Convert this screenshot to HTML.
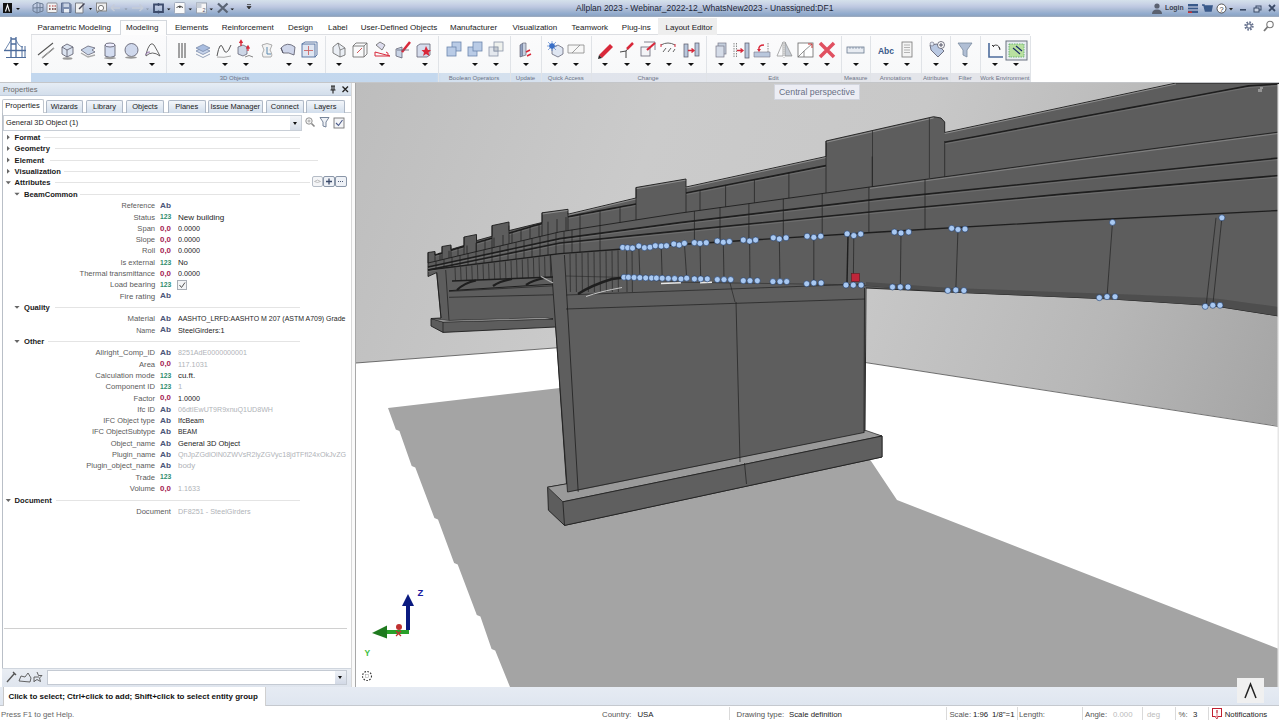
<!DOCTYPE html><html><head><meta charset="utf-8"><style>
*{margin:0;padding:0;box-sizing:border-box}
html,body{width:1279px;height:720px;overflow:hidden;background:#fff;font-family:"Liberation Sans",sans-serif;position:relative}
.a{position:absolute}
.t{position:absolute;white-space:pre;line-height:1}
svg{position:absolute;overflow:visible}
</style></head><body>
<div class="a" style="left:0;top:0;width:1279px;height:17px;background:linear-gradient(#d5e1eb 0px,#c9d3e6 4px,#bcc7e0 7px,#a9bad4 10px,#90aacd 14px,#8ea3bf 16px,#a9b3c2 17px)"></div>
<div class="t" style="left:576px;top:4px;font-size:8.5px;color:#1c2636">Allplan 2023 - Webinar_2022-12_WhatsNew2023 - Unassigned:DF1</div>
<div class="a" style="left:3px;top:3px;width:9px;height:10px;background:#111"></div>
<svg style="left:3px;top:3px" width="9" height="10"><path d="M2.5 8.5 L4.5 2 L6.5 8.5" stroke="#fff" stroke-width="1.1" fill="none"/></svg>
<div class="a" style="left:15.5px;top:8px;width:0;height:0;border-left:2.5px solid transparent;border-right:2.5px solid transparent;border-top:2.5px solid #111"></div>

<svg style="left:0;top:0" width="260" height="17" viewBox="0 0 260 17">
<g fill="none" stroke-width="1">
<path d="M33 5 L37 2.5 L43 4 V11 L37 13 L33 11 Z M37 2.5 V13 M33 8 L43 7.5 M40 3.2 V12" stroke="#6d7d95"/>
<rect x="47" y="3" width="10" height="9.5" rx="1" fill="#f2f2f2" stroke="#8a8f98"/>
<path d="M49 6 H50.5 M52 6 H53.5 M54.5 6 H56 M49 9 H50.5 M52 9 H53.5 M54.5 9 H56" stroke="#b03030" stroke-width="1.2"/>
<path d="M49 9 H50.5 M52 9 H53.5 M54.5 9 H56" stroke="#333" stroke-width="1.2"/>
<path d="M61.5 3 H69.5 L71 4.5 V12.5 H61.5 Z" fill="#7e8fb0" stroke="#5e6f90"/><rect x="63.5" y="3.5" width="5.5" height="3.5" fill="#c9d3e3" stroke="none"/><rect x="64" y="9" width="5" height="3.5" fill="#e8edf4" stroke="none"/>
<path d="M75.5 3 H83 V13 H75.5 Z" fill="#f0f0f0" stroke="#7a7f88"/><path d="M79 9 L84.5 3.5" stroke="#445" stroke-width="1.4"/>
<path d="M89 8 L92 8 L90.5 10Z" fill="#111" stroke="none"/>
<rect x="96.5" y="3" width="10" height="8" fill="#eee" stroke="#888"/><circle cx="101" cy="8" r="2.6" fill="#fff" stroke="#777"/><path d="M99 10.5 L97 13" stroke="#777"/>
<path d="M111 8 L114.5 4.5 M111 8 L114.5 11 M111 8 H120" stroke="#c5ccd8" stroke-width="1.5"/>
<path d="M124.5 8.5 L127.5 8.5 L126 10Z" fill="#8a94a4" stroke="none"/>
<path d="M143 8 L139.5 4.5 M143 8 L139.5 11 M143 8 H132" stroke="#c5ccd8" stroke-width="1.5"/>
<path d="M146 8.5 L149 8.5 L147.5 10Z" fill="#8a94a4" stroke="none"/>
<path d="M154 4.5 H163 V12 H154 Z" stroke="#3d4c6c" stroke-width="1.8"/><path d="M158.5 3 V6 M158.5 10.5 V13.5" stroke="#3d4c6c" stroke-width="1.4"/>
<path d="M167 8.5 L170.5 8.5 L168.75 10.3Z" fill="#111" stroke="none"/>
<rect x="174.5" y="2.5" width="10.5" height="11" rx="1" fill="#fafafa" stroke="#a0aabb"/><path d="M176.5 7.5 Q180 4.5 183 7.5" stroke="#444" stroke-width="1"/><circle cx="179.8" cy="7" r="1" fill="#444" stroke="none"/>
<path d="M188.5 8.5 L192 8.5 L190.25 10.3Z" fill="#111" stroke="none"/>
<rect x="196.5" y="3" width="10" height="10" fill="#f6f6f6" stroke="#98a0ac"/><rect x="196.5" y="3" width="5" height="5" fill="#c9cfd8" stroke="none"/><text x="202.5" y="12" font-size="5.5" fill="#556" stroke="none" font-family="Liberation Sans">2</text>
<path d="M209.5 8.5 L213 8.5 L211.25 10.3Z" fill="#111" stroke="none"/>
<path d="M218 3.5 L227.5 12.5 M227.5 3.5 L218 12.5" stroke="#5a6474" stroke-width="2.3"/>
<path d="M230.5 8.5 L234 8.5 L232.25 10.3Z" fill="#111" stroke="none"/>
<path d="M247 6.5 L251 6.5 L249 9Z M247 4.6 H251" fill="#333" stroke="#333" stroke-width="0.8"/>
</g></svg>
<svg style="left:1150px;top:1px" width="129" height="16">
<circle cx="7" cy="5" r="2.6" fill="#5a6170"/><path d="M2 13 Q2 8.5 7 8.5 Q12 8.5 12 13Z" fill="#5a6170"/>
<rect x="38" y="3" width="10" height="9" fill="#3a5a8a"/><rect x="38" y="5.5" width="10" height="1" fill="#dde"/><rect x="38" y="8.5" width="10" height="1" fill="#dde"/><rect x="38" y="10.5" width="4" height="1.5" fill="#c33"/>
<path d="M52 4 H54 L55.5 10 H61 L62 5 H55" stroke="#3a5a8a" stroke-width="1.6" fill="#3a5a8a"/>
<circle cx="71.5" cy="7.5" r="4.5" fill="#fff" stroke="#444" stroke-width="0.9"/><text x="71.5" y="10.5" font-size="7.5" text-anchor="middle" fill="#333" font-family="Liberation Sans">?</text>
<path d="M79 7 L83 7 L81 9.5Z" fill="#222"/>
<rect x="90" y="8" width="6" height="1.6" fill="#3a4a66"/>
<rect x="106" y="5" width="5" height="4" fill="none" stroke="#3a4a66"/><rect x="104" y="7" width="5" height="4" fill="#c8d2e2" stroke="#3a4a66"/>
<path d="M119 4 L125 10 M125 4 L119 10" stroke="#3a4a66" stroke-width="1.8"/>
</svg>
<div class="t" style="left:1165.40px;top:4.20px;font-size:8px;font-weight:bold;color:#3a4250;transform:scaleX(0.854);transform-origin:left center;">Login</div>
<div class="a" style="left:31px;top:34px;width:999px;height:1px;background:#dcdee2"></div>
<div class="a" style="left:658px;top:18px;width:59px;height:17px;background:#eeeeee"></div>
<div class="a" style="left:119.5px;top:19.5px;width:47.5px;height:16px;background:#fdfdfd;border:1px solid #d4d8dd;border-bottom:none"></div>
<div class="t" style="left:37.5px;top:23.5px;font-size:8px;color:#1a1a1a">Parametric Modeling</div>
<div class="t" style="left:126px;top:23.5px;font-size:8px;color:#1a1a1a">Modeling</div>
<div class="t" style="left:175px;top:23.5px;font-size:8px;color:#1a1a1a">Elements</div>
<div class="t" style="left:221.7px;top:23.5px;font-size:8px;color:#1a1a1a">Reinforcement</div>
<div class="t" style="left:288px;top:23.5px;font-size:8px;color:#1a1a1a">Design</div>
<div class="t" style="left:328px;top:23.5px;font-size:8px;color:#1a1a1a">Label</div>
<div class="t" style="left:360.7px;top:23.5px;font-size:8px;color:#1a1a1a">User-Defined Objects</div>
<div class="t" style="left:450px;top:23.5px;font-size:8px;color:#1a1a1a">Manufacturer</div>
<div class="t" style="left:512.5px;top:23.5px;font-size:8px;color:#1a1a1a">Visualization</div>
<div class="t" style="left:571.6px;top:23.5px;font-size:8px;color:#1a1a1a">Teamwork</div>
<div class="t" style="left:621.8px;top:23.5px;font-size:8px;color:#1a1a1a">Plug-ins</div>
<div class="t" style="left:665.5px;top:23.5px;font-size:8px;color:#1a1a1a">Layout Editor</div>
<svg style="left:1242px;top:19px" width="36" height="15">
<circle cx="7" cy="7" r="3.6" fill="none" stroke="#6a7590" stroke-width="2.2" stroke-dasharray="1.6 1.2"/><circle cx="7" cy="7" r="2.2" fill="none" stroke="#6a7590" stroke-width="1.2"/>
<circle cx="28" cy="5.5" r="3.2" fill="none" stroke="#777" stroke-width="1.1"/><path d="M25.5 8 L22 12" stroke="#777" stroke-width="1.8"/>
</svg>
<div class="a" style="left:31px;top:35px;width:999px;height:38px;background:linear-gradient(#fbfbfc,#f7f8f9);border-left:1px solid #e3e5e8"></div>
<div class="a" style="left:31px;top:73px;width:999px;height:9px;background:linear-gradient(90deg,#c2d7ee 0px,#c4d8ee 405px,#d3e0ee 410px,#d6e1ee 510px,#dde4ee 540px,#e0e4ec 560px,#e3e5ea 800px,#e4e5ea 999px)"></div>
<div class="a" style="left:0;top:82px;width:1279px;height:1px;background:#c4c6c9"></div>
<div class="a" style="left:166.0px;top:36px;width:1px;height:37px;background:#e0e3e7"></div>
<div class="a" style="left:324.6px;top:36px;width:1px;height:37px;background:#e0e3e7"></div>
<div class="a" style="left:438.0px;top:36px;width:1px;height:46px;background:#e0e3e7"></div>
<div class="a" style="left:510.0px;top:36px;width:1px;height:46px;background:#e0e3e7"></div>
<div class="a" style="left:541.0px;top:36px;width:1px;height:46px;background:#e0e3e7"></div>
<div class="a" style="left:590.6px;top:36px;width:1px;height:46px;background:#e0e3e7"></div>
<div class="a" style="left:705.6px;top:36px;width:1px;height:46px;background:#e0e3e7"></div>
<div class="a" style="left:841.4px;top:36px;width:1px;height:46px;background:#e0e3e7"></div>
<div class="a" style="left:870.0px;top:36px;width:1px;height:46px;background:#e0e3e7"></div>
<div class="a" style="left:921.0px;top:36px;width:1px;height:46px;background:#e0e3e7"></div>
<div class="a" style="left:950.4px;top:36px;width:1px;height:46px;background:#e0e3e7"></div>
<div class="a" style="left:980.0px;top:36px;width:1px;height:46px;background:#e0e3e7"></div>
<div class="a" style="left:1029.6px;top:36px;width:1px;height:46px;background:#e0e3e7"></div>
<div class="t" style="left:174.5px;width:120px;text-align:center;top:75px;font-size:6px;color:#6b7386">3D Objects</div>
<div class="t" style="left:414px;width:120px;text-align:center;top:75px;font-size:6px;color:#6b7386">Boolean Operators</div>
<div class="t" style="left:465.5px;width:120px;text-align:center;top:75px;font-size:6px;color:#6b7386">Update</div>
<div class="t" style="left:505.79999999999995px;width:120px;text-align:center;top:75px;font-size:6px;color:#6b7386">Quick Access</div>
<div class="t" style="left:588px;width:120px;text-align:center;top:75px;font-size:6px;color:#6b7386">Change</div>
<div class="t" style="left:713.5px;width:120px;text-align:center;top:75px;font-size:6px;color:#6b7386">Edit</div>
<div class="t" style="left:795.7px;width:120px;text-align:center;top:75px;font-size:6px;color:#6b7386">Measure</div>
<div class="t" style="left:835.5px;width:120px;text-align:center;top:75px;font-size:6px;color:#6b7386">Annotations</div>
<div class="t" style="left:875.7px;width:120px;text-align:center;top:75px;font-size:6px;color:#6b7386">Attributes</div>
<div class="t" style="left:905.2px;width:120px;text-align:center;top:75px;font-size:6px;color:#6b7386">Filter</div>
<div class="t" style="left:944.8px;width:120px;text-align:center;top:75px;font-size:6px;color:#6b7386">Work Environment</div>
<div class="a" style="left:12.5px;top:63px;width:0;height:0;border-left:3px solid transparent;border-right:3px solid transparent;border-top:3.5px solid #111"></div>
<div class="a" style="left:43px;top:63px;width:0;height:0;border-left:3px solid transparent;border-right:3px solid transparent;border-top:3.5px solid #111"></div>
<div class="a" style="left:107px;top:63px;width:0;height:0;border-left:3px solid transparent;border-right:3px solid transparent;border-top:3.5px solid #111"></div>
<div class="a" style="left:149px;top:63px;width:0;height:0;border-left:3px solid transparent;border-right:3px solid transparent;border-top:3.5px solid #111"></div>
<div class="a" style="left:178.5px;top:63px;width:0;height:0;border-left:3px solid transparent;border-right:3px solid transparent;border-top:3.5px solid #111"></div>
<div class="a" style="left:221.5px;top:63px;width:0;height:0;border-left:3px solid transparent;border-right:3px solid transparent;border-top:3.5px solid #111"></div>
<div class="a" style="left:242.5px;top:63px;width:0;height:0;border-left:3px solid transparent;border-right:3px solid transparent;border-top:3.5px solid #111"></div>
<div class="a" style="left:285.5px;top:63px;width:0;height:0;border-left:3px solid transparent;border-right:3px solid transparent;border-top:3.5px solid #111"></div>
<div class="a" style="left:306.5px;top:63px;width:0;height:0;border-left:3px solid transparent;border-right:3px solid transparent;border-top:3.5px solid #111"></div>
<div class="a" style="left:336px;top:63px;width:0;height:0;border-left:3px solid transparent;border-right:3px solid transparent;border-top:3.5px solid #111"></div>
<div class="a" style="left:378.6px;top:63px;width:0;height:0;border-left:3px solid transparent;border-right:3px solid transparent;border-top:3.5px solid #111"></div>
<div class="a" style="left:421.5px;top:63px;width:0;height:0;border-left:3px solid transparent;border-right:3px solid transparent;border-top:3.5px solid #111"></div>
<div class="a" style="left:472px;top:63px;width:0;height:0;border-left:3px solid transparent;border-right:3px solid transparent;border-top:3.5px solid #111"></div>
<div class="a" style="left:493px;top:63px;width:0;height:0;border-left:3px solid transparent;border-right:3px solid transparent;border-top:3.5px solid #111"></div>
<div class="a" style="left:522.7px;top:63px;width:0;height:0;border-left:3px solid transparent;border-right:3px solid transparent;border-top:3.5px solid #111"></div>
<div class="a" style="left:552px;top:63px;width:0;height:0;border-left:3px solid transparent;border-right:3px solid transparent;border-top:3.5px solid #111"></div>
<div class="a" style="left:573px;top:63px;width:0;height:0;border-left:3px solid transparent;border-right:3px solid transparent;border-top:3.5px solid #111"></div>
<div class="a" style="left:602px;top:63px;width:0;height:0;border-left:3px solid transparent;border-right:3px solid transparent;border-top:3.5px solid #111"></div>
<div class="a" style="left:624px;top:63px;width:0;height:0;border-left:3px solid transparent;border-right:3px solid transparent;border-top:3.5px solid #111"></div>
<div class="a" style="left:645px;top:63px;width:0;height:0;border-left:3px solid transparent;border-right:3px solid transparent;border-top:3.5px solid #111"></div>
<div class="a" style="left:666px;top:63px;width:0;height:0;border-left:3px solid transparent;border-right:3px solid transparent;border-top:3.5px solid #111"></div>
<div class="a" style="left:688px;top:63px;width:0;height:0;border-left:3px solid transparent;border-right:3px solid transparent;border-top:3.5px solid #111"></div>
<div class="a" style="left:717.7px;top:63px;width:0;height:0;border-left:3px solid transparent;border-right:3px solid transparent;border-top:3.5px solid #111"></div>
<div class="a" style="left:738.5px;top:63px;width:0;height:0;border-left:3px solid transparent;border-right:3px solid transparent;border-top:3.5px solid #111"></div>
<div class="a" style="left:760px;top:63px;width:0;height:0;border-left:3px solid transparent;border-right:3px solid transparent;border-top:3.5px solid #111"></div>
<div class="a" style="left:781.5px;top:63px;width:0;height:0;border-left:3px solid transparent;border-right:3px solid transparent;border-top:3.5px solid #111"></div>
<div class="a" style="left:802.7px;top:63px;width:0;height:0;border-left:3px solid transparent;border-right:3px solid transparent;border-top:3.5px solid #111"></div>
<div class="a" style="left:824px;top:63px;width:0;height:0;border-left:3px solid transparent;border-right:3px solid transparent;border-top:3.5px solid #111"></div>
<div class="a" style="left:853px;top:63px;width:0;height:0;border-left:3px solid transparent;border-right:3px solid transparent;border-top:3.5px solid #111"></div>
<div class="a" style="left:883px;top:63px;width:0;height:0;border-left:3px solid transparent;border-right:3px solid transparent;border-top:3.5px solid #111"></div>
<div class="a" style="left:904px;top:63px;width:0;height:0;border-left:3px solid transparent;border-right:3px solid transparent;border-top:3.5px solid #111"></div>
<div class="a" style="left:933px;top:63px;width:0;height:0;border-left:3px solid transparent;border-right:3px solid transparent;border-top:3.5px solid #111"></div>
<div class="a" style="left:962px;top:63px;width:0;height:0;border-left:3px solid transparent;border-right:3px solid transparent;border-top:3.5px solid #111"></div>
<div class="a" style="left:992px;top:63px;width:0;height:0;border-left:3px solid transparent;border-right:3px solid transparent;border-top:3.5px solid #111"></div>
<div class="a" style="left:1013px;top:63px;width:0;height:0;border-left:3px solid transparent;border-right:3px solid transparent;border-top:3.5px solid #111"></div>
<svg style="left:0;top:0" width="1279" height="83" viewBox="0 0 1279 83"><g fill="none" stroke="#4d6c9c" stroke-width="1.3"><path d="M11 37 V58 M16 37 V58 M11 39 H16 M11 44 H16"/><path d="M22 46 V57 M25 46 V57" stroke-width="1"/><path d="M4 50.5 H26" stroke-width="1.4"/><path d="M5 50 Q8 45 11 40 M16 40 Q19 47 23 47" stroke-width="0.8"/><path d="M6 57.5 H26" stroke-width="1"/></g><path d="M38 55 L53 43 M42 58 L54 48" stroke="#555" stroke-width="1.1" fill="none"/><path d="M42 58 L54 48" stroke="#aaa" stroke-width="1"/><g stroke="#556" stroke-width="0.8"><path d="M62 47 L67 44 L73 47 L73 54 L67 57 L62 54Z" fill="#dbe3f0"/><path d="M62 47 L67 50 L73 47 M67 50 V57" fill="none"/></g><ellipse cx="67.5" cy="58.5" rx="5" ry="1.2" fill="#999"/><g stroke="#667" stroke-width="0.8"><path d="M81 50 L88 46 L95 48 L92 50 L95 52 L88 55Z" fill="#c9d6ea"/></g><path d="M81 53 L88 57 L95 55" stroke="#aaa" stroke-width="1.4" fill="none"/><g stroke="#556" stroke-width="0.8"><path d="M105 45 V56 Q110 59 115 56 V45" fill="#d3dcf0"/><ellipse cx="110" cy="45" rx="5" ry="2" fill="#eef"/></g><ellipse cx="110" cy="58" rx="6" ry="1.2" fill="#999"/><circle cx="131.5" cy="50" r="6.5" fill="#cfd8ec" stroke="#556" stroke-width="0.8"/><ellipse cx="131" cy="57.5" rx="6" ry="1.2" fill="#999"/><path d="M146 54 Q150 40 154 45 Q158 52 160 56 Q152 50 146 56Z" fill="none" stroke="#555" stroke-width="0.9"/><path d="M145.5 55 Q147 51 150 52" stroke="#8a6aa0" fill="#d8c8e8" stroke-width="0.8"/><path d="M179 43 V58 M182 43 V58 M185 43 V58" stroke="#333" stroke-width="0.9"/><g stroke="#7a8aa8" stroke-width="0.8"><path d="M196 51 L203 47.5 L210 51 L203 54.5Z" fill="#c8d5ec"/><path d="M196 48 L203 44.5 L210 48 L203 51.5Z" fill="#a9bde0"/><path d="M196 54 L203 57.5 L210 54" fill="none"/></g><path d="M217 56 Q220 40 223 48 Q226 58 231 45" fill="none" stroke="#555" stroke-width="1"/><path d="M217 57 Q224 58 231 56" stroke="#aaa" fill="none"/><path d="M238 47 L243 45 L247 47 V54 L243 56 L238 54Z" fill="#cdd6e6" stroke="#556" stroke-width="0.7"/><path d="M241 46 V41 M239.5 43 L241 40.5 L242.5 43" stroke="#d8283a" stroke-width="1.4" fill="#d8283a"/><path d="M248 51 V47 M246.5 48.5 L248 46 L249.5 48.5" stroke="#d8283a" stroke-width="1.2" fill="#d8283a"/><path d="M245 57 Q249 54 253 57" stroke="#888" fill="none"/><path d="M262 45 Q267 42 272 45 L270 50 Q273 55 271 57 L263 57 Q261 54 264 50Z" fill="#f3f3f3" stroke="#999" stroke-width="0.8"/><path d="M267 47 V54 H271" stroke="#5a8ab0" fill="none" stroke-width="1"/><path d="M281 48 Q287 41 295 47 L294 55 Q289 52 283 53Z" fill="#cfd6ea" stroke="#556" stroke-width="0.8"/><path d="M281 48 L283 53" stroke="#556" fill="none"/><g stroke="#4d6c9c" stroke-width="0.9"><rect x="302" y="44" width="13" height="13" fill="#dfe6f2"/><path d="M302 44 L305 42 H317 V55 L315 57" fill="none"/><path d="M308.5 46 V55 M304 50.5 H313" stroke="#c66"/></g><path d="M333 47 L338 43 L345 48 V55 L340 57 L333 53Z" fill="#eaeef4" stroke="#666" stroke-width="0.8"/><path d="M338 43 L340 50 L345 48 M340 50 V57" stroke="#666" fill="none" stroke-width="0.7"/><path d="M353 46 L356 43 H367 V54 L364 57 H353Z M353 46 H364 V57 M364 46 L367 43" fill="none" stroke="#666" stroke-width="0.8"/><path d="M357 53 L362 48" stroke="#c44" stroke-width="0.9"/><path d="M375 52 L390 56 H375Z" fill="none" stroke="#d8283a" stroke-width="1"/><path d="M376 45 L380 42 L385 45 L382 50Z" fill="#dde" stroke="#666" stroke-width="0.8"/><path d="M386 52 Q389 53 388 55" stroke="#d8283a" fill="none"/><path d="M396 49 L402 47 V58 L396 56Z" fill="#c9d4e6" stroke="#556" stroke-width="0.7"/><path d="M402 52 L410 42" stroke="#d8283a" stroke-width="2.5"/><path d="M397 50 H409" stroke="#667" stroke-width="0.8"/><path d="M417 46 L420 44 H430 V55 L427 57 H417Z" fill="#d5dcec" stroke="#667" stroke-width="0.8"/><path d="M426 46 L428 50 L431 50 L428.5 52.5 L429.5 56 L426 54 L423 56 L424 52.5 L421.5 50 L424.5 50Z" fill="#d8283a"/><g stroke="#6b86ad" stroke-width="0.8"><rect x="452" y="42" width="9" height="9" fill="#b9cbe6"/><rect x="447" y="47" width="9" height="9" fill="#b9cbe6"/></g><g stroke="#6b86ad" stroke-width="0.8"><rect x="468" y="47" width="9" height="9" fill="#b9cbe6"/><rect x="473" y="42" width="9" height="9" fill="#b9cbe6"/></g><g stroke="#8a95a8" stroke-width="0.8"><rect x="489" y="47" width="9" height="9" fill="#e4e8ee"/><rect x="494" y="42" width="9" height="9" fill="#e8ebe4" fill-opacity="0.6"/><rect x="494" y="47" width="4" height="4" fill="#c6cbd2"/></g><path d="M520 45 L523 43 V56 L520 57Z" fill="#90a0c0" stroke="#556" stroke-width="0.6"/><path d="M523 43 H526 V55 L523 56" fill="#c8d0e0" stroke="#556" stroke-width="0.6"/><path d="M526 52 L530 50 M527 56 L531 54" stroke="#d8283a" stroke-width="1.5"/><path d="M552 48 L558 45 L563 48 V54 L558 57 L552 54Z" fill="#dfe6f2" stroke="#667" stroke-width="0.8"/><circle cx="552" cy="46" r="2.8" fill="#3a70c8"/><path d="M548 42 L556 50 M556 42 L548 50 M552 41 V51 M547 46 H557" stroke="#3a70c8" stroke-width="0.6"/><path d="M568 45 H584 V53 H568Z" fill="#f7f7f7" stroke="#888" stroke-width="0.8"/><path d="M572 53 L580 45" stroke="#888" stroke-width="0.8"/><path d="M599 55 L610 44 L613 47 L602 58Z" fill="#d8283a"/><path d="M599 55 L598 59 L602 58Z" fill="#222"/><path d="M620 52 L626 51 L626 58 M626 51 L630 46" stroke="#333" stroke-width="0.9" fill="none"/><path d="M627 49 L633 43" stroke="#d8283a" stroke-width="2.5"/><rect x="641" y="47" width="9" height="9" fill="#f3f4f7" stroke="#667" stroke-width="0.8"/><path d="M644 42 H655 V50" fill="none" stroke="#667" stroke-width="0.8"/><path d="M647 50 L655 43" stroke="#d8283a" stroke-width="2.2"/><path d="M661 45 Q668 41 675 45" stroke="#555" fill="none" stroke-width="0.9"/><path d="M661 44 L661 47 M675 44 L675 47" stroke="#d8283a"/><path d="M663 52 L666 48 M668 52 L671 48 M673 52 L675 49" stroke="#555" stroke-width="0.9"/><rect x="684" y="44" width="4" height="13" fill="#b9c7dc" stroke="#556" stroke-width="0.7"/><rect x="695" y="43" width="4" height="13" fill="#b9c7dc" stroke="#556" stroke-width="0.7"/><path d="M688 50.5 H694 M691.5 48.5 L694 50.5 L691.5 52.5" stroke="#d8283a" stroke-width="1.4" fill="none"/><rect x="718" y="43" width="8" height="11" fill="#c5cfdd" stroke="#778" stroke-width="0.7"/><rect x="716" y="46" width="8" height="11" fill="#d5dce8" stroke="#778" stroke-width="0.7"/><path d="M734 43 V58 M736.5 43 V58" stroke="#888" stroke-dasharray="1.5 1"/><rect x="745" y="43" width="4" height="15" fill="#b9c7dc" stroke="#556" stroke-width="0.7"/><path d="M737 50.5 H743 M740.5 48.5 L743 50.5 L740.5 52.5" stroke="#d8283a" stroke-width="1.3" fill="none"/><path d="M754 52 H770 V57 H754Z" fill="#b9c7dc" stroke="#778" stroke-width="0.6"/><path d="M768 43 V52" stroke="#888" stroke-dasharray="1.5 1"/><path d="M764 45 Q758 45 759 50" stroke="#d8283a" stroke-width="1.4" fill="none"/><path d="M757 49 L759 52 L761 49" fill="#d8283a"/><path d="M777 56 L783 42 V56Z" fill="none" stroke="#999" stroke-width="0.8"/><path d="M785 42 L792 56 H785Z" fill="#c5cbd3" stroke="#888" stroke-width="0.7"/><path d="M784 41 V58" stroke="#bbb" stroke-dasharray="1 1"/><rect x="798" y="43" width="15" height="14" fill="#fff" stroke="#666" stroke-width="0.8"/><path d="M798 57 L804 51 V57 M804 51 L812 44" stroke="#666" stroke-width="0.7" fill="none"/><path d="M808 44 L812 44 L812 48" stroke="#c33" fill="none"/><path d="M820 43 L834 57 M834 43 L820 57" stroke="#e05060" stroke-width="3.5"/><rect x="847" y="47" width="17" height="6" fill="#e8ecf2" stroke="#6a7a90" stroke-width="0.8"/><path d="M850 47 V49 M853 47 V49 M856 47 V49 M859 47 V49 M862 47 V49" stroke="#6a7a90" stroke-width="0.6"/><text x="886" y="54" font-family="Liberation Sans" font-weight="bold" font-size="8.5" fill="#3a5a8a" text-anchor="middle">Abc</text><rect x="902" y="42" width="10" height="15" fill="#f4f4f4" stroke="#777" stroke-width="0.8"/><path d="M904 45 H910 M904 47.5 H910 M904 50 H910 M904 52.5 H910" stroke="#888" stroke-width="0.6"/><path d="M930 45 L937 44 L944 51 L938 57 L931 50Z" fill="#b9c8e2" stroke="#556" stroke-width="0.8"/><circle cx="941" cy="45" r="3.5" fill="#fff" stroke="#556" stroke-width="0.8"/><path d="M939 45 H943 M941 43 V47" stroke="#556"/><circle cx="932" cy="44" r="2" fill="#dfe6f2" stroke="#667" stroke-width="0.6"/><path d="M958 43 H972 L967 50 V57 L963 55 V50Z" fill="#b0bed4" stroke="#7a8aa0" stroke-width="0.8"/><path d="M989 43 V57 H1003" stroke="#4d6c9c" stroke-width="1.6" fill="none"/><path d="M993 46 Q998 43 1000 49" stroke="#333" fill="none" stroke-width="0.9"/><path d="M992 45 L994 47 M1000 50 L999 47" stroke="#333"/><rect x="1006" y="41" width="21" height="19" fill="#e8ecf0" stroke="#6a7380" stroke-width="1"/><rect x="1009" y="44" width="15" height="13" fill="#b9e0a0" stroke="#5a6" stroke-dasharray="1.5 1" stroke-width="0.8"/><path d="M1013 48 L1020 54 M1016 46 L1022 51" stroke="#1a2a6a" stroke-width="1.2"/></svg>
<div class="a" style="left:0;top:83px;width:353px;height:13px;background:linear-gradient(#e6edf5,#d3deeb);border-bottom:1px solid #c3cedd"></div>
<div class="t" style="left:2.80px;top:85.60px;font-size:8px;color:#6a6a6a;transform:scaleX(0.946);transform-origin:left center;">Properties</div>
<svg style="left:326px;top:84px" width="26" height="11"><path d="M5 2 H9 M6 2 V6 M8 2 V6 M4.5 6 H9.5 M7 6 V9.5" stroke="#222" stroke-width="1.1" fill="none"/><path d="M16.5 2.5 L22 8 M22 2.5 L16.5 8" stroke="#222" stroke-width="1.3"/></svg>
<div class="a" style="left:1.5px;top:112px;width:350px;height:575px;border-left:1px solid #b9bfc7;border-right:1px solid #b9bfc7;border-top:1px solid #c9cfd6;background:#fff"></div>
<div class="a" style="left:1.5px;top:98.5px;width:42.1px;height:14.5px;background:#fff;border:1px solid #c0c6ce;border-bottom:none;border-radius:2px 2px 0 0"></div>
<div class="t" style="left:1.5px;width:42.1px;text-align:center;top:102px;font-size:7.6px;color:#1a1a1a">Properties</div>
<div class="a" style="left:46px;top:99.5px;width:36.5px;height:13px;background:linear-gradient(#f3f6fa,#d2deec);border:1px solid #aeb8c6;border-bottom:none;border-radius:2px 2px 0 0"></div>
<div class="t" style="left:46px;width:36.5px;text-align:center;top:103px;font-size:7.5px;color:#222">Wizards</div>
<div class="a" style="left:86px;top:99.5px;width:37px;height:13px;background:linear-gradient(#f3f6fa,#d2deec);border:1px solid #aeb8c6;border-bottom:none;border-radius:2px 2px 0 0"></div>
<div class="t" style="left:86px;width:37px;text-align:center;top:103px;font-size:7.5px;color:#222">Library</div>
<div class="a" style="left:126px;top:99.5px;width:38px;height:13px;background:linear-gradient(#f3f6fa,#d2deec);border:1px solid #aeb8c6;border-bottom:none;border-radius:2px 2px 0 0"></div>
<div class="t" style="left:126px;width:38px;text-align:center;top:103px;font-size:7.5px;color:#222">Objects</div>
<div class="a" style="left:167.5px;top:99.5px;width:38.5px;height:13px;background:linear-gradient(#f3f6fa,#d2deec);border:1px solid #aeb8c6;border-bottom:none;border-radius:2px 2px 0 0"></div>
<div class="t" style="left:167.5px;width:38.5px;text-align:center;top:103px;font-size:7.5px;color:#222">Planes</div>
<div class="a" style="left:208px;top:99.5px;width:54.5px;height:13px;background:linear-gradient(#f3f6fa,#d2deec);border:1px solid #aeb8c6;border-bottom:none;border-radius:2px 2px 0 0"></div>
<div class="t" style="left:208px;width:54.5px;text-align:center;top:103px;font-size:7.5px;color:#222">Issue Manager</div>
<div class="a" style="left:266px;top:99.5px;width:37.5px;height:13px;background:linear-gradient(#f3f6fa,#d2deec);border:1px solid #aeb8c6;border-bottom:none;border-radius:2px 2px 0 0"></div>
<div class="t" style="left:266px;width:37.5px;text-align:center;top:103px;font-size:7.5px;color:#222">Connect</div>
<div class="a" style="left:306px;top:99.5px;width:38.5px;height:13px;background:linear-gradient(#f3f6fa,#d2deec);border:1px solid #aeb8c6;border-bottom:none;border-radius:2px 2px 0 0"></div>
<div class="t" style="left:306px;width:38.5px;text-align:center;top:103px;font-size:7.5px;color:#222">Layers</div>
<div class="a" style="left:3px;top:115px;width:299px;height:16px;background:#fff;border:1px solid #c8ced6"></div>
<div class="a" style="left:290px;top:116px;width:11px;height:14px;background:linear-gradient(#f4f6f9,#d6dde8)"></div>
<div class="a" style="left:293px;top:122px;width:0;height:0;border-left:2.5px solid transparent;border-right:2.5px solid transparent;border-top:3px solid #111"></div>
<div class="t" style="left:6px;top:119px;font-size:7.4px;color:#222">General 3D Object (1)</div>
<svg style="left:303px;top:115px" width="48" height="16">
<circle cx="6" cy="6" r="3.2" fill="#f4f4f4" stroke="#888" stroke-width="0.9"/><path d="M8.5 8.5 L11.5 11.5" stroke="#888" stroke-width="1.6"/><path d="M4.5 6 H7.5 M6 4.5 V7.5" stroke="#888" stroke-width="0.6"/>
<path d="M17 2.5 H26 L23 7 V12 L20 11 V7Z" fill="#eef1f6" stroke="#6a7890" stroke-width="0.9"/>
<rect x="31" y="3" width="10" height="10" fill="#f4f5f7" stroke="#777" stroke-width="0.9"/><path d="M33 8 L35.5 10.5 L39.5 5" stroke="#4a5a8a" stroke-width="1.1" fill="none"/>
</svg>
<div class="t" style="left:14.6px;top:133.7px;font-size:7.6px;font-weight:bold;color:#1a1a1a">Format</div>
<div class="t" style="left:14.6px;top:145.1px;font-size:7.6px;font-weight:bold;color:#1a1a1a">Geometry</div>
<div class="t" style="left:14.6px;top:156.5px;font-size:7.6px;font-weight:bold;color:#1a1a1a">Element</div>
<div class="t" style="left:14.6px;top:167.8px;font-size:7.6px;font-weight:bold;color:#1a1a1a">Visualization</div>
<div class="t" style="left:14.6px;top:179.1px;font-size:7.6px;font-weight:bold;color:#1a1a1a">Attributes</div>
<div class="a" style="left:44px;top:136.5px;width:256px;height:1px;background:#e4e4e4"></div>
<div class="a" style="left:55px;top:148px;width:245px;height:1px;background:#e4e4e4"></div>
<div class="a" style="left:50px;top:159.5px;width:268px;height:1px;background:#e4e4e4"></div>
<div class="a" style="left:64px;top:170.8px;width:236px;height:1px;background:#e4e4e4"></div>
<div class="a" style="left:55px;top:182px;width:255px;height:1px;background:#e4e4e4"></div>
<svg style="left:312px;top:176px" width="36" height="12"><rect x="0.5" y="0.5" width="10" height="10" rx="1.5" fill="#f4f5f7" stroke="#b5bcc6"/><path d="M2.5 5.5 Q5.5 2.5 8.5 5.5 Q5.5 7.5 2.5 5.5" stroke="#aaa" fill="none" stroke-width="0.7"/>
<rect x="11.5" y="0.5" width="11" height="10" rx="1.5" fill="#eef1f6" stroke="#8a96a8"/><path d="M17 2.5 V8.5 M14 5.5 H20" stroke="#3a4a6a" stroke-width="1.3"/>
<rect x="23.5" y="0.5" width="11" height="10" rx="1.5" fill="#eef1f6" stroke="#8a96a8"/><path d="M26 5.5 H32" stroke="#3a4a6a" stroke-width="0.9" stroke-dasharray="1 1"/></svg>
<div class="t" style="left:24px;top:190.5px;font-size:7.6px;font-weight:bold;color:#1a1a1a">BeamCommon</div>
<div class="t" style="left:24px;top:303.7px;font-size:7.6px;font-weight:bold;color:#1a1a1a">Quality</div>
<div class="t" style="left:24px;top:337.8px;font-size:7.6px;font-weight:bold;color:#1a1a1a">Other</div>
<div class="a" style="left:80px;top:193.5px;width:220px;height:1px;background:#e4e4e4"></div>
<div class="a" style="left:55px;top:306.5px;width:245px;height:1px;background:#e4e4e4"></div>
<div class="a" style="left:48px;top:340.8px;width:252px;height:1px;background:#e4e4e4"></div>
<div class="t" style="left:14.6px;top:496.8px;font-size:7.6px;font-weight:bold;color:#1a1a1a">Document</div>
<div class="a" style="left:56px;top:499.8px;width:244px;height:1px;background:#e4e4e4"></div>
<svg style="left:0;top:0" width="353" height="720"><path d="M7 134.7 L9.8 137.2 L7 139.7Z" fill="#666"/><path d="M7 146.1 L9.8 148.6 L7 151.1Z" fill="#666"/><path d="M7 157.5 L9.8 160 L7 162.5Z" fill="#666"/><path d="M7 168.8 L9.8 171.3 L7 173.8Z" fill="#666"/><path d="M5.700000000000001 181.29999999999998 L10.9 181.29999999999998 L8.3 184.2Z" fill="#666"/><path d="M14.4 192.7 L19.6 192.7 L17 195.6Z" fill="#666"/><path d="M14.4 305.9 L19.6 305.9 L17 308.8Z" fill="#666"/><path d="M14.4 340.0 L19.6 340.0 L17 342.90000000000003Z" fill="#666"/><path d="M5.700000000000001 499.0 L10.9 499.0 L8.3 501.90000000000003Z" fill="#666"/></svg>
<div class="t" style="left:120.04px;top:202.20px;font-size:7.6px;color:#5a5a5a;transform:scaleX(0.955);transform-origin:right center;">Reference</div>
<div class="t" style="left:160.00px;top:202.00px;font-size:7.9px;font-weight:bold;color:#4a5578;transform:scaleX(1.045);transform-origin:left center;">Ab</div>
<div class="t" style="left:133.56px;top:213.50px;font-size:7.6px;color:#5a5a5a;">Status</div>
<div class="t" style="left:160.00px;top:213.30px;font-size:7.9px;font-weight:bold;color:#2f8d6d;transform:scaleX(0.857);transform-origin:left center;">123</div>
<div class="t" style="left:177.90px;top:213.50px;font-size:7.6px;color:#1e1e1e;transform:scaleX(1.066);transform-origin:left center;">New building</div>
<div class="t" style="left:137.35px;top:224.80px;font-size:7.6px;color:#5a5a5a;">Span</div>
<div class="t" style="left:160.00px;top:224.60px;font-size:7.9px;font-weight:bold;color:#a3204f;">0,0</div>
<div class="t" style="left:177.90px;top:224.80px;font-size:7.6px;color:#1e1e1e;transform:scaleX(0.947);transform-origin:left center;">0.0000</div>
<div class="t" style="left:135.66px;top:236.10px;font-size:7.6px;color:#5a5a5a;">Slope</div>
<div class="t" style="left:160.00px;top:235.90px;font-size:7.9px;font-weight:bold;color:#a3204f;">0,0</div>
<div class="t" style="left:177.90px;top:236.10px;font-size:7.6px;color:#1e1e1e;transform:scaleX(0.947);transform-origin:left center;">0.0000</div>
<div class="t" style="left:142.01px;top:247.40px;font-size:7.6px;color:#5a5a5a;">Roll</div>
<div class="t" style="left:160.00px;top:247.20px;font-size:7.9px;font-weight:bold;color:#a3204f;">0,0</div>
<div class="t" style="left:177.90px;top:247.40px;font-size:7.6px;color:#1e1e1e;transform:scaleX(0.947);transform-origin:left center;">0.0000</div>
<div class="t" style="left:120.04px;top:258.70px;font-size:7.6px;color:#5a5a5a;transform:scaleX(0.987);transform-origin:right center;">Is external</div>
<div class="t" style="left:160.00px;top:258.50px;font-size:7.9px;font-weight:bold;color:#2f8d6d;transform:scaleX(0.857);transform-origin:left center;">123</div>
<div class="t" style="left:177.90px;top:258.70px;font-size:7.6px;color:#1e1e1e;transform:scaleX(1.019);transform-origin:left center;">No</div>
<div class="t" style="left:79.50px;top:270.00px;font-size:7.6px;color:#5a5a5a;">Thermal transmittance</div>
<div class="t" style="left:160.00px;top:269.80px;font-size:7.9px;font-weight:bold;color:#a3204f;">0,0</div>
<div class="t" style="left:177.90px;top:270.00px;font-size:7.6px;color:#1e1e1e;transform:scaleX(0.947);transform-origin:left center;">0.0000</div>
<div class="t" style="left:110.73px;top:281.30px;font-size:7.6px;color:#5a5a5a;transform:scaleX(1.021);transform-origin:right center;">Load bearing</div>
<div class="t" style="left:160.00px;top:281.10px;font-size:7.9px;font-weight:bold;color:#2f8d6d;transform:scaleX(0.857);transform-origin:left center;">123</div>
<svg style="left:177px;top:280.1px" width="11" height="11"><rect x="0.5" y="0.5" width="9" height="9" fill="#f3f4f6" stroke="#a8adb5"/><path d="M2.5 5 L4.5 7.5 L8 2.5" stroke="#555" fill="none" stroke-width="1"/></svg>
<div class="t" style="left:120.89px;top:292.60px;font-size:7.6px;color:#5a5a5a;transform:scaleX(1.038);transform-origin:right center;">Fire rating</div>
<div class="t" style="left:160.00px;top:292.40px;font-size:7.9px;font-weight:bold;color:#4a5578;transform:scaleX(1.045);transform-origin:left center;">Ab</div>
<div class="t" style="left:128.07px;top:315.20px;font-size:7.6px;color:#5a5a5a;transform:scaleX(1.021);transform-origin:right center;">Material</div>
<div class="t" style="left:160.00px;top:315.00px;font-size:7.9px;font-weight:bold;color:#4a5578;transform:scaleX(1.045);transform-origin:left center;">Ab</div>
<div class="t" style="left:177.90px;top:315.20px;font-size:7.6px;color:#1e1e1e;transform:scaleX(0.918);transform-origin:left center;">AASHTO_LRFD:AASHTO M 207 (ASTM A709) Grade</div>
<div class="t" style="left:134.83px;top:326.50px;font-size:7.6px;color:#5a5a5a;transform:scaleX(0.942);transform-origin:right center;">Name</div>
<div class="t" style="left:160.00px;top:326.30px;font-size:7.9px;font-weight:bold;color:#4a5578;transform:scaleX(1.045);transform-origin:left center;">Ab</div>
<div class="t" style="left:177.90px;top:326.50px;font-size:7.6px;color:#1e1e1e;transform:scaleX(0.961);transform-origin:left center;">SteelGirders:1</div>
<div class="t" style="left:95.55px;top:349.30px;font-size:7.6px;color:#5a5a5a;">Allright_Comp_ID</div>
<div class="t" style="left:160.00px;top:349.10px;font-size:7.9px;font-weight:bold;color:#4a5578;transform:scaleX(1.045);transform-origin:left center;">Ab</div>
<div class="t" style="left:177.90px;top:349.30px;font-size:7.6px;color:#b0b3b8;transform:scaleX(0.938);transform-origin:left center;">8251AdE0000000001</div>
<div class="t" style="left:139.05px;top:360.60px;font-size:7.6px;color:#5a5a5a;">Area</div>
<div class="t" style="left:160.00px;top:360.40px;font-size:7.9px;font-weight:bold;color:#a3204f;">0,0</div>
<div class="t" style="left:177.90px;top:360.60px;font-size:7.6px;color:#b0b3b8;transform:scaleX(0.957);transform-origin:left center;">117.1031</div>
<div class="t" style="left:96.38px;top:371.90px;font-size:7.6px;color:#5a5a5a;transform:scaleX(1.012);transform-origin:right center;">Calculation mode</div>
<div class="t" style="left:160.00px;top:371.70px;font-size:7.9px;font-weight:bold;color:#2f8d6d;transform:scaleX(0.857);transform-origin:left center;">123</div>
<div class="t" style="left:177.90px;top:371.90px;font-size:7.6px;color:#1e1e1e;transform:scaleX(1.044);transform-origin:left center;">cu.ft.</div>
<div class="t" style="left:106.10px;top:383.20px;font-size:7.6px;color:#5a5a5a;transform:scaleX(1.012);transform-origin:right center;">Component ID</div>
<div class="t" style="left:160.00px;top:383.00px;font-size:7.9px;font-weight:bold;color:#2f8d6d;transform:scaleX(0.857);transform-origin:left center;">123</div>
<div class="t" style="left:177.90px;top:383.20px;font-size:7.6px;color:#b0b3b8;">1</div>
<div class="t" style="left:133.56px;top:394.50px;font-size:7.6px;color:#5a5a5a;">Factor</div>
<div class="t" style="left:160.00px;top:394.30px;font-size:7.9px;font-weight:bold;color:#a3204f;">0,0</div>
<div class="t" style="left:177.90px;top:394.50px;font-size:7.6px;color:#1e1e1e;transform:scaleX(0.947);transform-origin:left center;">1.0000</div>
<div class="t" style="left:137.37px;top:405.80px;font-size:7.6px;color:#5a5a5a;">Ifc ID</div>
<div class="t" style="left:160.00px;top:405.60px;font-size:7.9px;font-weight:bold;color:#4a5578;transform:scaleX(1.045);transform-origin:left center;">Ab</div>
<div class="t" style="left:177.90px;top:405.80px;font-size:7.6px;color:#b0b3b8;transform:scaleX(0.934);transform-origin:left center;">06dtIEwUT9R9xnuQ1UD8WH</div>
<div class="t" style="left:102.31px;top:417.10px;font-size:7.6px;color:#5a5a5a;transform:scaleX(0.976);transform-origin:right center;">IFC Object type</div>
<div class="t" style="left:160.00px;top:416.90px;font-size:7.9px;font-weight:bold;color:#4a5578;transform:scaleX(1.045);transform-origin:left center;">Ab</div>
<div class="t" style="left:177.90px;top:417.10px;font-size:7.6px;color:#1e1e1e;transform:scaleX(0.929);transform-origin:left center;">IfcBeam</div>
<div class="t" style="left:90.90px;top:428.40px;font-size:7.6px;color:#5a5a5a;transform:scaleX(0.986);transform-origin:right center;">IFC ObjectSubtype</div>
<div class="t" style="left:160.00px;top:428.20px;font-size:7.9px;font-weight:bold;color:#4a5578;transform:scaleX(1.045);transform-origin:left center;">Ab</div>
<div class="t" style="left:177.90px;top:428.40px;font-size:7.6px;color:#1e1e1e;transform:scaleX(0.887);transform-origin:left center;">BEAM</div>
<div class="t" style="left:109.90px;top:439.70px;font-size:7.6px;color:#5a5a5a;transform:scaleX(0.985);transform-origin:right center;">Object_name</div>
<div class="t" style="left:160.00px;top:439.50px;font-size:7.9px;font-weight:bold;color:#4a5578;transform:scaleX(1.045);transform-origin:left center;">Ab</div>
<div class="t" style="left:177.90px;top:439.70px;font-size:7.6px;color:#1e1e1e;transform:scaleX(0.988);transform-origin:left center;">General 3D Object</div>
<div class="t" style="left:110.74px;top:451.00px;font-size:7.6px;color:#5a5a5a;transform:scaleX(0.978);transform-origin:right center;">Plugin_name</div>
<div class="t" style="left:160.00px;top:450.80px;font-size:7.9px;font-weight:bold;color:#4a5578;transform:scaleX(1.045);transform-origin:left center;">Ab</div>
<div class="t" style="left:177.90px;top:451.00px;font-size:7.6px;color:#b0b3b8;transform:scaleX(0.941);transform-origin:left center;">QnJpZGdlOlN0ZWVsR2lyZGVyc18jdTFfI24xOkJvZG</div>
<div class="t" style="left:86.23px;top:462.30px;font-size:7.6px;color:#5a5a5a;">Plugin_object_name</div>
<div class="t" style="left:160.00px;top:462.10px;font-size:7.9px;font-weight:bold;color:#4a5578;transform:scaleX(1.045);transform-origin:left center;">Ab</div>
<div class="t" style="left:177.90px;top:462.30px;font-size:7.6px;color:#b0b3b8;transform:scaleX(1.044);transform-origin:left center;">body</div>
<div class="t" style="left:135.53px;top:473.60px;font-size:7.6px;color:#5a5a5a;">Trade</div>
<div class="t" style="left:160.00px;top:473.40px;font-size:7.9px;font-weight:bold;color:#2f8d6d;transform:scaleX(0.857);transform-origin:left center;">123</div>
<div class="t" style="left:129.75px;top:484.90px;font-size:7.6px;color:#5a5a5a;">Volume</div>
<div class="t" style="left:160.00px;top:484.70px;font-size:7.9px;font-weight:bold;color:#a3204f;">0,0</div>
<div class="t" style="left:177.90px;top:484.90px;font-size:7.6px;color:#b0b3b8;transform:scaleX(0.947);transform-origin:left center;">1.1633</div>
<div class="t" style="left:136.16px;top:508.10px;font-size:7.6px;color:#5a5a5a;">Document</div>
<div class="t" style="left:177.90px;top:508.10px;font-size:7.6px;color:#b0b3b8;transform:scaleX(0.955);transform-origin:left center;">DF8251 - SteelGirders</div>
<div class="a" style="left:4px;top:628px;width:343px;height:1px;background:#d0d0d0"></div>
<div class="a" style="left:2px;top:667.5px;width:349px;height:19.5px;background:linear-gradient(#e9edf3,#dfe5ee);border-top:1px solid #d0d6de"></div>
<div class="a" style="left:47px;top:669.5px;width:300px;height:15px;background:#fff;border:1px solid #c4cad3"></div>
<div class="a" style="left:335px;top:670.5px;width:11px;height:13px;background:linear-gradient(#eef1f6,#d2d9e6)"></div>
<div class="a" style="left:338px;top:676px;width:0;height:0;border-left:2.5px solid transparent;border-right:2.5px solid transparent;border-top:3px solid #111"></div>
<svg style="left:3px;top:669px" width="42" height="16"><path d="M4 13 L11 5 M10 3 L13 6" stroke="#555" stroke-width="1.4"/><path d="M16 12 L18 7 L22 8 L25 4 L28 9 L27 13Z" fill="none" stroke="#555" stroke-width="0.9"/><path d="M31 13 V8 L36 8 M34 3 L35.5 6.5 L39 6.5 L36.5 9 L37.5 12.5 L34 10.5 L31 12.5" fill="none" stroke="#555" stroke-width="0.9"/></svg>
<div class="a" style="left:351px;top:83px;width:1px;height:604px;background:#d8d8d8"></div>
<div class="a" style="left:352px;top:83px;width:4px;height:604px;background:#fafafa"></div>
<div class="a" style="left:355px;top:83px;width:1px;height:604px;background:#a8a8a8"></div>
<svg style="left:0;top:0" width="1279" height="720" viewBox="0 0 1279 720">
<defs>
<linearGradient id="sky" x1="356" y1="84" x2="1279" y2="430" gradientUnits="userSpaceOnUse">
<stop offset="0" stop-color="#bdbdbd"/><stop offset="0.3" stop-color="#cbcbcb"/><stop offset="0.55" stop-color="#c8c8c8"/><stop offset="0.8" stop-color="#b7b7b7"/><stop offset="1" stop-color="#a4a4a4"/>
</linearGradient>
<clipPath id="vpc"><rect x="356" y="83" width="923" height="604"/></clipPath>
</defs>
<g clip-path="url(#vpc)">
<rect x="356" y="83" width="923" height="604" fill="url(#sky)"/>
<polygon points="356.0,363.0 700.0,337.0 1279.0,426.0 1279.0,687.0 356.0,687.0" fill="#ffffff"/>
<path d="M356 363 L700 337 L1279 426.5" stroke="#3a3a3a" stroke-width="0.7" fill="none"/>
<polygon points="388.0,408.0 560.0,388.0 870.0,455.0 870.0,459.6 897.0,500.0 1279.0,649.0 1279.0,687.0 510.0,687.0 495.2,650.5 491.6,649.0 480.4,616.5 476.8,615.0 457.7,564.5 454.1,563.0 438.0,519.5 434.4,518.0 415.3,467.5 411.7,466.0 399.4,431.1 395.8,429.6" fill="#a4a4a4"/>
<polygon points="428.0,254.0 428.0,252.5 435.0,251.5 435.0,255.0 442.0,253.5 442.0,246.5 451.0,245.0 451.0,249.4 464.0,245.5 464.0,237.0 476.5,234.5 476.5,240.6 492.0,236.3 492.0,225.6 509.0,222.0 509.0,230.6 542.0,222.5 542.0,212.8 568.0,209.3 568.0,214.2 636.0,198.0 636.0,187.5 686.0,179.0 686.0,187.0 826.0,156.5 826.0,141.0 933.6,116.7 941.0,118.0 944.7,122.0 944.7,132.5 1176.0,83.0 1279.0,83.0 1279.0,316.0 1212.0,305.5 1112.0,299.0 950.0,292.0 866.0,288.0 865.0,433.0 882.0,436.0 882.0,457.0 564.5,525.4 548.4,510.2 547.6,487.2 566.5,484.0 555.7,327.0 443.0,332.4 431.0,326.0 431.0,318.5 441.0,318.0 436.7,272.6 428.0,276.5" fill="#5d5d5d" stroke="#1e1e1e" stroke-width="0.9" stroke-linejoin="round"/>
<polygon points="547.6,487.2 562.9,501.8 882.0,436.0 866.0,430.5" fill="#9a9a9a" stroke="#1e1e1e" stroke-width="0.7"/>
<polygon points="562.9,501.8 882.0,436.0 882.0,457.0 564.5,525.4" fill="#5f5f5f" stroke="#1e1e1e" stroke-width="0.8"/>
<polygon points="553.2,290.0 866.0,288.0 864.0,432.5 578.0,490.5 567.5,492.0" fill="#5e5e5e"/>
<path d="M567.5 492 L864 432.5" stroke="#1e1e1e" stroke-width="0.8" fill="none"/>
<path d="M550.5 255 L567.5 492 M564.4 255 L578.2 491.8 M864.5 288 L864 433" stroke="#1e1e1e" stroke-width="0.8" fill="none"/>
<path d="M566 309 L865 299 M736 302 L740 462 M744.5 463 L746.5 484" stroke="#1e1e1e" stroke-width="0.7" fill="none"/>
<path d="M566 295 L865 284" stroke="#2a2a2a" stroke-width="0.8" fill="none"/>
<path d="M730 283 L735 302" stroke="#1e1e1e" stroke-width="0.6" fill="none"/>
<path d="M436.7 272.6 L441 318 M445.7 270 L449 320.5 M449 291.4 L553 285.8 M449 320.5 L553 318.5 M431 318.5 L443 322 L553 319 M443 322 L443 332.4" stroke="#1e1e1e" stroke-width="0.7" fill="none"/>
<polygon points="431.0,318.5 443.0,322.0 553.0,319.0 545.0,317.5 449.0,320.5" fill="#a8a8a8" stroke="#1e1e1e" stroke-width="0.5"/>
<polyline points="435.0,254.9 435.6,254.8 436.3,254.6 436.9,254.4 437.5,254.2 438.2,254.0 438.8,253.8 439.5,253.6 440.1,253.4 440.7,253.3 441.4,253.1 442.0,252.9" stroke="#1e1e1e" stroke-width="1.6" fill="none"/>
<polyline points="435.0,256.5 435.6,256.4 436.3,256.2 436.9,256.0 437.5,255.8 438.2,255.6 438.8,255.4 439.5,255.2 440.1,255.0 440.7,254.9 441.4,254.7 442.0,254.5" stroke="#7a7a7a" stroke-width="0.6" fill="none"/>
<polyline points="451.0,250.2 452.2,249.9 453.4,249.5 454.5,249.2 455.7,248.8 456.9,248.5 458.1,248.2 459.3,247.8 460.5,247.5 461.6,247.1 462.8,246.8 464.0,246.4" stroke="#1e1e1e" stroke-width="1.6" fill="none"/>
<polyline points="451.0,251.8 452.2,251.5 453.4,251.1 454.5,250.8 455.7,250.4 456.9,250.1 458.1,249.8 459.3,249.4 460.5,249.1 461.6,248.7 462.8,248.4 464.0,248.0" stroke="#7a7a7a" stroke-width="0.6" fill="none"/>
<polyline points="476.5,242.7 477.9,242.3 479.3,241.9 480.7,241.5 482.1,241.1 483.5,240.7 485.0,240.3 486.4,239.8 487.8,239.4 489.2,239.0 490.6,238.6 492.0,238.2" stroke="#1e1e1e" stroke-width="1.6" fill="none"/>
<polyline points="476.5,244.3 477.9,243.9 479.3,243.5 480.7,243.1 482.1,242.7 483.5,242.3 485.0,241.9 486.4,241.4 487.8,241.0 489.2,240.6 490.6,240.2 492.0,239.8" stroke="#7a7a7a" stroke-width="0.6" fill="none"/>
<polyline points="509.0,233.2 512.0,232.3 515.0,231.4 518.0,230.5 521.0,229.7 524.0,228.8 527.0,227.9 530.0,227.0 533.0,226.1 536.0,225.3 539.0,224.4 542.0,223.5" stroke="#1e1e1e" stroke-width="1.6" fill="none"/>
<polyline points="509.0,234.8 512.0,233.9 515.0,233.0 518.0,232.1 521.0,231.3 524.0,230.4 527.0,229.5 530.0,228.6 533.0,227.7 536.0,226.9 539.0,226.0 542.0,225.1" stroke="#7a7a7a" stroke-width="0.6" fill="none"/>
<polyline points="568.0,216.7 574.2,215.6 580.4,214.4 586.5,213.2 592.7,212.1 598.9,210.9 605.1,209.8 611.3,208.6 617.5,207.5 623.6,206.3 629.8,205.2 636.0,204.0" stroke="#1e1e1e" stroke-width="1.6" fill="none"/>
<polyline points="568.0,218.3 574.2,217.2 580.4,216.0 586.5,214.8 592.7,213.7 598.9,212.5 605.1,211.4 611.3,210.2 617.5,209.1 623.6,207.9 629.8,206.8 636.0,205.6" stroke="#7a7a7a" stroke-width="0.6" fill="none"/>
<polyline points="686.0,193.0 698.7,190.5 711.5,188.0 724.2,185.5 736.9,183.0 749.6,180.5 762.4,178.1 775.1,175.6 787.8,173.1 800.5,170.6 813.3,168.1 826.0,165.6" stroke="#1e1e1e" stroke-width="1.6" fill="none"/>
<polyline points="686.0,194.6 698.7,192.1 711.5,189.6 724.2,187.1 736.9,184.6 749.6,182.1 762.4,179.7 775.1,177.2 787.8,174.7 800.5,172.2 813.3,169.7 826.0,167.2" stroke="#7a7a7a" stroke-width="0.6" fill="none"/>
<polyline points="944.7,142.3 975.1,136.7 1005.5,131.0 1035.9,125.3 1066.3,119.6 1096.7,114.0 1127.0,108.4 1157.4,102.8 1187.8,97.2 1218.2,91.5 1248.6,85.9 1279.0,84.0" stroke="#1e1e1e" stroke-width="1.6" fill="none"/>
<polyline points="944.7,143.9 975.1,138.3 1005.5,132.6 1035.9,126.9 1066.3,121.2 1096.7,115.6 1127.0,110.0 1157.4,104.4 1187.8,98.8 1218.2,93.1 1248.6,87.5 1279.0,85.6" stroke="#7a7a7a" stroke-width="0.6" fill="none"/>
<polyline points="428.0,263.0 560.0,231.8 680.0,213.1 880.0,185.6 1060.0,161.0 1279.0,132.0" stroke="#1e1e1e" stroke-width="0.9" fill="none"/>
<polyline points="428.0,267.0 560.0,238.6 680.0,222.6 880.0,198.9 1060.0,180.5 1279.0,158.0" stroke="#1e1e1e" stroke-width="1.6" fill="none"/>
<polyline points="428.0,268.6 560.0,240.2 680.0,224.2 880.0,200.5 1060.0,182.1 1279.0,159.6" stroke="#7a7a7a" stroke-width="0.6" fill="none"/>
<polyline points="428.0,270.0 560.0,243.0 680.0,230.9 880.0,211.0 1060.0,194.4 1279.0,175.5" stroke="#1e1e1e" stroke-width="1.6" fill="none"/>
<polyline points="428.0,271.6 560.0,244.6 680.0,232.5 880.0,212.6 1060.0,196.0 1279.0,177.1" stroke="#7a7a7a" stroke-width="0.6" fill="none"/>
<polyline points="428.0,270.0 560.0,253.6 623.0,249.0 680.0,244.5 880.0,232.0 1060.0,221.5 1279.0,210.5" stroke="#1e1e1e" stroke-width="1.3" fill="none"/>
<polyline points="568.0,215.2 636.0,199.0" stroke="#9a9a9a" stroke-width="0.8" fill="none"/>
<polyline points="686.0,188.0 826.0,157.5" stroke="#9a9a9a" stroke-width="0.8" fill="none"/>
<polyline points="944.7,133.5 1176.0,84.0" stroke="#9a9a9a" stroke-width="0.8" fill="none"/>
<polyline points="826.5,142.2 933.6,118.0" stroke="#9a9a9a" stroke-width="0.8" fill="none"/>
<polyline points="636.5,188.7 685.5,180.2" stroke="#9a9a9a" stroke-width="0.8" fill="none"/>
<polyline points="542.5,214.0 567.5,210.5" stroke="#9a9a9a" stroke-width="0.8" fill="none"/>
<polyline points="870.0,188.4 907.2,183.3 944.4,178.2 981.5,173.1 1018.7,168.0 1055.9,163.0 1093.1,158.0 1130.3,153.1 1167.5,148.2 1204.6,143.2 1241.8,138.3 1279.0,133.4" stroke="#8c8c8c" stroke-width="0.8" fill="none"/>
<polyline points="566.0,276.0 623.0,277.4 680.0,282.2 855.0,284.8 880.0,286.7 950.0,292.0 1112.0,299.0 1212.0,305.5 1279.0,316.0" stroke="#2a2a2a" stroke-width="0.6" fill="none"/>
<polygon points="866.0,285.6 880.2,286.7 894.5,287.8 908.7,288.9 923.0,290.0 937.2,291.0 951.4,292.1 965.7,292.7 979.9,293.3 994.2,293.9 1008.4,294.5 1022.7,295.1 1036.9,295.8 1051.1,296.4 1065.4,297.0 1079.6,297.6 1093.9,298.2 1108.1,298.8 1122.3,299.7 1136.6,300.6 1150.8,301.5 1165.1,302.4 1179.3,303.4 1193.6,304.3 1207.8,305.2 1222.0,307.1 1236.3,309.3 1250.5,311.5 1264.8,313.8 1279.0,316.0 1279.0,307.0 1264.8,305.1 1250.5,303.2 1236.3,301.3 1222.0,299.3 1207.8,297.8 1193.6,297.2 1179.3,296.6 1165.1,296.0 1150.8,295.4 1136.6,294.8 1122.3,294.2 1108.1,293.7 1093.9,293.3 1079.6,292.7 1065.4,292.2 1051.1,291.7 1036.9,291.2 1022.7,290.6 1008.4,290.1 994.2,289.6 979.9,289.1 965.7,288.5 951.4,288.0 937.2,287.1 923.0,286.1 908.7,285.1 894.5,284.1 880.2,283.1 866.0,282.1" fill="#4e4e4e"/>
<path d="M440.0 253.5 L440.0 260.2" stroke="#1e1e1e" stroke-width="0.7" fill="none"/>
<path d="M449.0 250.8 L449.0 258.0" stroke="#1e1e1e" stroke-width="0.7" fill="none"/>
<path d="M458.0 248.2 L458.0 255.9" stroke="#1e1e1e" stroke-width="0.7" fill="none"/>
<path d="M467.0 245.5 L467.0 253.8" stroke="#1e1e1e" stroke-width="0.7" fill="none"/>
<path d="M476.0 242.9 L476.0 251.7" stroke="#1e1e1e" stroke-width="0.7" fill="none"/>
<path d="M485.0 240.2 L485.0 249.5" stroke="#1e1e1e" stroke-width="0.7" fill="none"/>
<path d="M494.0 237.6 L494.0 247.4" stroke="#1e1e1e" stroke-width="0.7" fill="none"/>
<path d="M503.0 235.0 L503.0 245.3" stroke="#1e1e1e" stroke-width="0.7" fill="none"/>
<path d="M512.0 232.3 L512.0 243.1" stroke="#1e1e1e" stroke-width="0.7" fill="none"/>
<path d="M521.0 229.7 L521.0 241.0" stroke="#1e1e1e" stroke-width="0.7" fill="none"/>
<path d="M530.0 227.0 L530.0 238.9" stroke="#1e1e1e" stroke-width="0.7" fill="none"/>
<path d="M539.0 224.4 L539.0 236.8" stroke="#1e1e1e" stroke-width="0.7" fill="none"/>
<path d="M548.0 221.7 L548.0 234.6" stroke="#1e1e1e" stroke-width="0.7" fill="none"/>
<path d="M557.0 219.1 L557.0 232.5" stroke="#1e1e1e" stroke-width="0.7" fill="none"/>
<path d="M566.0 217.1 L566.0 230.9" stroke="#1e1e1e" stroke-width="0.7" fill="none"/>
<path d="M580.0 214.5 L580.0 228.7" stroke="#1e1e1e" stroke-width="0.7" fill="none"/>
<path d="M600.0 210.7 L600.0 225.6" stroke="#1e1e1e" stroke-width="0.7" fill="none"/>
<path d="M620.0 207.0 L620.0 222.4" stroke="#1e1e1e" stroke-width="0.7" fill="none"/>
<path d="M700.0 190.3 L700.0 210.3" stroke="#1e1e1e" stroke-width="0.7" fill="none"/>
<path d="M725.6 185.2 L725.6 206.8" stroke="#1e1e1e" stroke-width="0.7" fill="none"/>
<path d="M754.4 179.6 L754.4 202.9" stroke="#1e1e1e" stroke-width="0.7" fill="none"/>
<path d="M788.9 172.9 L788.9 198.1" stroke="#1e1e1e" stroke-width="0.7" fill="none"/>
<path d="M872.2 156.5 L872.2 186.7" stroke="#1e1e1e" stroke-width="0.7" fill="none"/>
<path d="M428 252.5 L428 263.0 M435 252.5 L435 261.3" stroke="#1e1e1e" stroke-width="0.7" fill="none"/>
<path d="M442 246.5 L442 259.7 M451 246.5 L451 257.6" stroke="#1e1e1e" stroke-width="0.7" fill="none"/>
<path d="M464 237 L464 254.5 M476.5 237 L476.5 251.5" stroke="#1e1e1e" stroke-width="0.7" fill="none"/>
<path d="M492 225.6 L492 247.9 M509 225.6 L509 243.9" stroke="#1e1e1e" stroke-width="0.7" fill="none"/>
<path d="M542 212.8 L542 236.1 M568 212.8 L568 230.6" stroke="#1e1e1e" stroke-width="0.7" fill="none"/>
<path d="M636 187.5 L636 220.0 M686 187.5 L686 212.3" stroke="#1e1e1e" stroke-width="0.7" fill="none"/>
<path d="M826 141 L826 193.0 M944.7 141 L944.7 176.8" stroke="#1e1e1e" stroke-width="0.7" fill="none"/>
<path d="M872.5 131 V187 M929.4 118 V178" stroke="#1e1e1e" stroke-width="0.6" fill="none"/>
<path d="M436.0 261.1 L436.0 269.0" stroke="#1e1e1e" stroke-width="0.7" fill="none"/>
<path d="M444.0 259.2 L444.0 268.0" stroke="#1e1e1e" stroke-width="0.7" fill="none"/>
<path d="M452.0 257.3 L452.0 267.0" stroke="#1e1e1e" stroke-width="0.7" fill="none"/>
<path d="M460.0 255.4 L460.0 266.0" stroke="#1e1e1e" stroke-width="0.7" fill="none"/>
<path d="M468.0 253.5 L468.0 265.0" stroke="#1e1e1e" stroke-width="0.7" fill="none"/>
<path d="M476.0 251.7 L476.0 264.0" stroke="#1e1e1e" stroke-width="0.7" fill="none"/>
<path d="M484.0 249.8 L484.0 263.0" stroke="#1e1e1e" stroke-width="0.7" fill="none"/>
<path d="M492.0 247.9 L492.0 262.0" stroke="#1e1e1e" stroke-width="0.7" fill="none"/>
<path d="M500.0 246.0 L500.0 261.1" stroke="#1e1e1e" stroke-width="0.7" fill="none"/>
<path d="M508.0 244.1 L508.0 260.1" stroke="#1e1e1e" stroke-width="0.7" fill="none"/>
<path d="M516.0 242.2 L516.0 259.1" stroke="#1e1e1e" stroke-width="0.7" fill="none"/>
<path d="M524.0 240.3 L524.0 258.1" stroke="#1e1e1e" stroke-width="0.7" fill="none"/>
<path d="M532.0 238.4 L532.0 257.1" stroke="#1e1e1e" stroke-width="0.7" fill="none"/>
<path d="M540.0 236.5 L540.0 256.1" stroke="#1e1e1e" stroke-width="0.7" fill="none"/>
<path d="M548.0 234.6 L548.0 255.1" stroke="#1e1e1e" stroke-width="0.7" fill="none"/>
<path d="M556.0 232.7 L556.0 254.1" stroke="#1e1e1e" stroke-width="0.7" fill="none"/>
<path d="M564.0 231.2 L564.0 253.3" stroke="#1e1e1e" stroke-width="0.7" fill="none"/>
<path d="M572.0 229.9 L572.0 252.7" stroke="#1e1e1e" stroke-width="0.7" fill="none"/>
<path d="M580.0 228.7 L580.0 252.1" stroke="#1e1e1e" stroke-width="0.7" fill="none"/>
<path d="M600.0 225.6 L600.0 250.7" stroke="#1e1e1e" stroke-width="0.7" fill="none"/>
<path d="M694.4 211.1 L694.4 243.6" stroke="#1e1e1e" stroke-width="0.7" fill="none"/>
<path d="M720.0 207.6 L720.0 242.0" stroke="#1e1e1e" stroke-width="0.7" fill="none"/>
<path d="M748.9 203.6 L748.9 240.2" stroke="#1e1e1e" stroke-width="0.7" fill="none"/>
<path d="M783.3 198.9 L783.3 238.0" stroke="#1e1e1e" stroke-width="0.7" fill="none"/>
<path d="M822.2 193.5 L822.2 235.6" stroke="#1e1e1e" stroke-width="0.7" fill="none"/>
<path d="M868.9 187.1 L868.9 232.7" stroke="#1e1e1e" stroke-width="0.7" fill="none"/>
<path d="M925.0 179.4 L925.0 229.4" stroke="#1e1e1e" stroke-width="0.7" fill="none"/>
<path d="M455.0 267.6 L455.5 281.0" stroke="#262626" stroke-width="0.7" fill="none"/>
<path d="M460.6 266.9 L461.1 280.8" stroke="#262626" stroke-width="0.7" fill="none"/>
<path d="M466.2 266.3 L466.7 280.6" stroke="#262626" stroke-width="0.7" fill="none"/>
<path d="M471.8 265.6 L472.3 280.3" stroke="#262626" stroke-width="0.7" fill="none"/>
<path d="M477.4 264.9 L477.9 280.1" stroke="#262626" stroke-width="0.7" fill="none"/>
<path d="M483.0 264.2 L483.5 279.9" stroke="#262626" stroke-width="0.7" fill="none"/>
<path d="M488.6 263.5 L489.1 279.7" stroke="#262626" stroke-width="0.7" fill="none"/>
<path d="M494.2 262.8 L494.7 279.4" stroke="#262626" stroke-width="0.7" fill="none"/>
<path d="M499.8 262.1 L500.3 279.2" stroke="#262626" stroke-width="0.7" fill="none"/>
<path d="M505.4 261.4 L505.9 279.0" stroke="#262626" stroke-width="0.7" fill="none"/>
<path d="M511.0 260.7 L511.5 278.8" stroke="#262626" stroke-width="0.7" fill="none"/>
<path d="M516.6 260.0 L517.1 278.5" stroke="#262626" stroke-width="0.7" fill="none"/>
<path d="M522.2 259.3 L522.7 278.3" stroke="#262626" stroke-width="0.7" fill="none"/>
<path d="M527.8 258.6 L528.3 278.1" stroke="#262626" stroke-width="0.7" fill="none"/>
<path d="M533.4 257.9 L533.9 277.9" stroke="#262626" stroke-width="0.7" fill="none"/>
<path d="M539.0 257.2 L539.5 277.6" stroke="#262626" stroke-width="0.7" fill="none"/>
<path d="M544.6 256.5 L545.1 277.4" stroke="#262626" stroke-width="0.7" fill="none"/>
<path d="M550.2 255.8 L550.7 277.2" stroke="#262626" stroke-width="0.7" fill="none"/>
<path d="M452 281 L553 277" stroke="#1e1e1e" stroke-width="1.4" fill="none"/>
<path d="M457 290 Q464 283 476 280.5 M493 286 Q500 281 512 279 M526 285 Q533 280 545 278" stroke="#1e1e1e" stroke-width="2.2" fill="none"/>
<path d="M541 276.5 L553 283" stroke="#b0b0b0" stroke-width="1.2" fill="none"/>
<path d="M449 290.7 L553 284.1" stroke="#1e1e1e" stroke-width="1" fill="none"/><path d="M449 297.3 L553 294.8" stroke="#1e1e1e" stroke-width="0.7" fill="none"/>
<path d="M570 253.9 L570.4 292" stroke="#262626" stroke-width="0.7" fill="none"/>
<path d="M576 253.4 L576.4 292" stroke="#262626" stroke-width="0.7" fill="none"/>
<path d="M582 253.0 L582.4 292" stroke="#262626" stroke-width="0.7" fill="none"/>
<path d="M588 252.6 L588.4 292" stroke="#262626" stroke-width="0.7" fill="none"/>
<path d="M594 252.1 L594.4 292" stroke="#262626" stroke-width="0.7" fill="none"/>
<path d="M600 251.7 L600.4 292" stroke="#262626" stroke-width="0.7" fill="none"/>
<path d="M606 251.2 L606.4 292" stroke="#262626" stroke-width="0.7" fill="none"/>
<path d="M612 250.8 L612.4 292" stroke="#262626" stroke-width="0.7" fill="none"/>
<path d="M618 250.4 L618.4 292" stroke="#262626" stroke-width="0.7" fill="none"/>
<path d="M626.6 249.7 L627.0 292" stroke="#262626" stroke-width="0.7" fill="none"/>
<path d="M632 249.3 L632.4 292" stroke="#262626" stroke-width="0.7" fill="none"/>
<path d="M578 294 Q592 285 612 279 L624 277.5" stroke="#1e1e1e" stroke-width="2.4" fill="none"/>
<path d="M586 296.5 Q600 291.5 622 287.5" stroke="#c4c4c4" stroke-width="1" fill="none"/>
<path d="M661 283.5 L681 282.8 M700 282.6 L712 282.2" stroke="#e8e8e8" stroke-width="1.6" fill="none"/>
<path d="M638.8 246.1 L639.9 277.7" stroke="#2a2a2a" stroke-width="0.8" fill="none"/>
<path d="M661.2 246.1 L662.2 278.2" stroke="#2a2a2a" stroke-width="0.8" fill="none"/>
<path d="M684.4 243.3 L686.7 278.2" stroke="#2a2a2a" stroke-width="0.8" fill="none"/>
<path d="M700 243.3 L700.7 278.9" stroke="#2a2a2a" stroke-width="0.8" fill="none"/>
<path d="M723.3 242.2 L724 279.6" stroke="#2a2a2a" stroke-width="0.8" fill="none"/>
<path d="M749.6 241.1 L750 280.7" stroke="#2a2a2a" stroke-width="0.8" fill="none"/>
<path d="M779.3 238.9 L780 281.6" stroke="#2a2a2a" stroke-width="0.8" fill="none"/>
<path d="M813.8 237.3 L813.8 282.9" stroke="#2a2a2a" stroke-width="0.8" fill="none"/>
<path d="M853.8 235.6 L853.3 285.1" stroke="#2a2a2a" stroke-width="0.8" fill="none"/>
<path d="M901 233.0 L900.3 287.0" stroke="#2a2a2a" stroke-width="0.8" fill="none"/>
<path d="M958 229.5 L955.8 290.0" stroke="#2a2a2a" stroke-width="0.8" fill="none"/>
<path d="M1112.5 222.4 L1107 296.7" stroke="#2a2a2a" stroke-width="0.8" fill="none"/>
<path d="M1221.9 217.8 L1212.8 305.3" stroke="#2a2a2a" stroke-width="0.8" fill="none"/>
<path d="M1216 217.8 L1206 306.4" stroke="#2a2a2a" stroke-width="0.8" fill="none"/>
<path d="M848 236 L847 283" stroke="#1e1e1e" stroke-width="1.4" fill="none"/>
<circle cx="622.7" cy="247.4" r="3" fill="#a9c9f2" stroke="#1f3a6a" stroke-width="0.6"/>
<circle cx="627.6" cy="247.7" r="3" fill="#a9c9f2" stroke="#1f3a6a" stroke-width="0.6"/>
<circle cx="632.5" cy="248.1" r="3" fill="#a9c9f2" stroke="#1f3a6a" stroke-width="0.6"/>
<circle cx="638.8" cy="246.1" r="3" fill="#a9c9f2" stroke="#1f3a6a" stroke-width="0.6"/>
<circle cx="644.4" cy="247.7" r="3" fill="#a9c9f2" stroke="#1f3a6a" stroke-width="0.6"/>
<circle cx="650.0" cy="247.2" r="3" fill="#a9c9f2" stroke="#1f3a6a" stroke-width="0.6"/>
<circle cx="655.3" cy="245.8" r="3" fill="#a9c9f2" stroke="#1f3a6a" stroke-width="0.6"/>
<circle cx="661.2" cy="246.1" r="3" fill="#a9c9f2" stroke="#1f3a6a" stroke-width="0.6"/>
<circle cx="666.5" cy="245.8" r="3" fill="#a9c9f2" stroke="#1f3a6a" stroke-width="0.6"/>
<circle cx="673.8" cy="244.0" r="3" fill="#a9c9f2" stroke="#1f3a6a" stroke-width="0.6"/>
<circle cx="679.2" cy="245.0" r="3" fill="#a9c9f2" stroke="#1f3a6a" stroke-width="0.6"/>
<circle cx="684.4" cy="243.3" r="3" fill="#a9c9f2" stroke="#1f3a6a" stroke-width="0.6"/>
<circle cx="694.4" cy="242.7" r="3" fill="#a9c9f2" stroke="#1f3a6a" stroke-width="0.6"/>
<circle cx="700.0" cy="243.3" r="3" fill="#a9c9f2" stroke="#1f3a6a" stroke-width="0.6"/>
<circle cx="706.2" cy="242.7" r="3" fill="#a9c9f2" stroke="#1f3a6a" stroke-width="0.6"/>
<circle cx="717.3" cy="241.1" r="3" fill="#a9c9f2" stroke="#1f3a6a" stroke-width="0.6"/>
<circle cx="723.3" cy="242.2" r="3" fill="#a9c9f2" stroke="#1f3a6a" stroke-width="0.6"/>
<circle cx="729.3" cy="241.6" r="3" fill="#a9c9f2" stroke="#1f3a6a" stroke-width="0.6"/>
<circle cx="743.3" cy="240.0" r="3" fill="#a9c9f2" stroke="#1f3a6a" stroke-width="0.6"/>
<circle cx="749.6" cy="241.1" r="3" fill="#a9c9f2" stroke="#1f3a6a" stroke-width="0.6"/>
<circle cx="755.6" cy="240.0" r="3" fill="#a9c9f2" stroke="#1f3a6a" stroke-width="0.6"/>
<circle cx="773.3" cy="237.8" r="3" fill="#a9c9f2" stroke="#1f3a6a" stroke-width="0.6"/>
<circle cx="779.3" cy="238.9" r="3" fill="#a9c9f2" stroke="#1f3a6a" stroke-width="0.6"/>
<circle cx="786.0" cy="237.8" r="3" fill="#a9c9f2" stroke="#1f3a6a" stroke-width="0.6"/>
<circle cx="807.1" cy="236.2" r="3" fill="#a9c9f2" stroke="#1f3a6a" stroke-width="0.6"/>
<circle cx="813.8" cy="237.3" r="3" fill="#a9c9f2" stroke="#1f3a6a" stroke-width="0.6"/>
<circle cx="820.7" cy="236.2" r="3" fill="#a9c9f2" stroke="#1f3a6a" stroke-width="0.6"/>
<circle cx="847.1" cy="233.8" r="3" fill="#a9c9f2" stroke="#1f3a6a" stroke-width="0.6"/>
<circle cx="853.8" cy="235.6" r="3" fill="#a9c9f2" stroke="#1f3a6a" stroke-width="0.6"/>
<circle cx="860.7" cy="234.0" r="3" fill="#a9c9f2" stroke="#1f3a6a" stroke-width="0.6"/>
<circle cx="894.4" cy="232.0" r="3" fill="#a9c9f2" stroke="#1f3a6a" stroke-width="0.6"/>
<circle cx="901.0" cy="233.0" r="3" fill="#a9c9f2" stroke="#1f3a6a" stroke-width="0.6"/>
<circle cx="908.6" cy="232.0" r="3" fill="#a9c9f2" stroke="#1f3a6a" stroke-width="0.6"/>
<circle cx="951.7" cy="228.3" r="3" fill="#a9c9f2" stroke="#1f3a6a" stroke-width="0.6"/>
<circle cx="958.0" cy="229.5" r="3" fill="#a9c9f2" stroke="#1f3a6a" stroke-width="0.6"/>
<circle cx="965.0" cy="229.1" r="3" fill="#a9c9f2" stroke="#1f3a6a" stroke-width="0.6"/>
<circle cx="1112.5" cy="222.4" r="3" fill="#a9c9f2" stroke="#1f3a6a" stroke-width="0.6"/>
<circle cx="1221.9" cy="217.8" r="3" fill="#a9c9f2" stroke="#1f3a6a" stroke-width="0.6"/>
<circle cx="624.0" cy="277.2" r="3" fill="#a9c9f2" stroke="#1f3a6a" stroke-width="0.6"/>
<circle cx="628.4" cy="277.3" r="3" fill="#a9c9f2" stroke="#1f3a6a" stroke-width="0.6"/>
<circle cx="634.1" cy="277.5" r="3" fill="#a9c9f2" stroke="#1f3a6a" stroke-width="0.6"/>
<circle cx="639.9" cy="277.7" r="3" fill="#a9c9f2" stroke="#1f3a6a" stroke-width="0.6"/>
<circle cx="645.7" cy="277.9" r="3" fill="#a9c9f2" stroke="#1f3a6a" stroke-width="0.6"/>
<circle cx="651.5" cy="278.0" r="3" fill="#a9c9f2" stroke="#1f3a6a" stroke-width="0.6"/>
<circle cx="656.4" cy="278.1" r="3" fill="#a9c9f2" stroke="#1f3a6a" stroke-width="0.6"/>
<circle cx="662.2" cy="278.2" r="3" fill="#a9c9f2" stroke="#1f3a6a" stroke-width="0.6"/>
<circle cx="668.3" cy="278.4" r="3" fill="#a9c9f2" stroke="#1f3a6a" stroke-width="0.6"/>
<circle cx="674.6" cy="278.6" r="3" fill="#a9c9f2" stroke="#1f3a6a" stroke-width="0.6"/>
<circle cx="681.0" cy="278.9" r="3" fill="#a9c9f2" stroke="#1f3a6a" stroke-width="0.6"/>
<circle cx="686.7" cy="278.2" r="3" fill="#a9c9f2" stroke="#1f3a6a" stroke-width="0.6"/>
<circle cx="694.4" cy="278.9" r="3" fill="#a9c9f2" stroke="#1f3a6a" stroke-width="0.6"/>
<circle cx="700.7" cy="278.9" r="3" fill="#a9c9f2" stroke="#1f3a6a" stroke-width="0.6"/>
<circle cx="707.3" cy="278.9" r="3" fill="#a9c9f2" stroke="#1f3a6a" stroke-width="0.6"/>
<circle cx="717.3" cy="279.6" r="3" fill="#a9c9f2" stroke="#1f3a6a" stroke-width="0.6"/>
<circle cx="724.0" cy="279.6" r="3" fill="#a9c9f2" stroke="#1f3a6a" stroke-width="0.6"/>
<circle cx="730.7" cy="279.6" r="3" fill="#a9c9f2" stroke="#1f3a6a" stroke-width="0.6"/>
<circle cx="743.3" cy="280.7" r="3" fill="#a9c9f2" stroke="#1f3a6a" stroke-width="0.6"/>
<circle cx="750.0" cy="280.7" r="3" fill="#a9c9f2" stroke="#1f3a6a" stroke-width="0.6"/>
<circle cx="757.3" cy="280.7" r="3" fill="#a9c9f2" stroke="#1f3a6a" stroke-width="0.6"/>
<circle cx="772.9" cy="281.6" r="3" fill="#a9c9f2" stroke="#1f3a6a" stroke-width="0.6"/>
<circle cx="780.0" cy="281.6" r="3" fill="#a9c9f2" stroke="#1f3a6a" stroke-width="0.6"/>
<circle cx="786.7" cy="281.6" r="3" fill="#a9c9f2" stroke="#1f3a6a" stroke-width="0.6"/>
<circle cx="806.7" cy="283.8" r="3" fill="#a9c9f2" stroke="#1f3a6a" stroke-width="0.6"/>
<circle cx="813.8" cy="282.9" r="3" fill="#a9c9f2" stroke="#1f3a6a" stroke-width="0.6"/>
<circle cx="821.1" cy="282.9" r="3" fill="#a9c9f2" stroke="#1f3a6a" stroke-width="0.6"/>
<circle cx="846.0" cy="285.1" r="3" fill="#a9c9f2" stroke="#1f3a6a" stroke-width="0.6"/>
<circle cx="853.3" cy="285.1" r="3" fill="#a9c9f2" stroke="#1f3a6a" stroke-width="0.6"/>
<circle cx="861.1" cy="285.1" r="3" fill="#a9c9f2" stroke="#1f3a6a" stroke-width="0.6"/>
<circle cx="892.5" cy="287.0" r="3" fill="#a9c9f2" stroke="#1f3a6a" stroke-width="0.6"/>
<circle cx="900.3" cy="287.0" r="3" fill="#a9c9f2" stroke="#1f3a6a" stroke-width="0.6"/>
<circle cx="908.0" cy="287.0" r="3" fill="#a9c9f2" stroke="#1f3a6a" stroke-width="0.6"/>
<circle cx="947.8" cy="290.5" r="3" fill="#a9c9f2" stroke="#1f3a6a" stroke-width="0.6"/>
<circle cx="955.8" cy="290.0" r="3" fill="#a9c9f2" stroke="#1f3a6a" stroke-width="0.6"/>
<circle cx="963.9" cy="290.5" r="3" fill="#a9c9f2" stroke="#1f3a6a" stroke-width="0.6"/>
<circle cx="1099.3" cy="297.7" r="3" fill="#a9c9f2" stroke="#1f3a6a" stroke-width="0.6"/>
<circle cx="1107.0" cy="296.7" r="3" fill="#a9c9f2" stroke="#1f3a6a" stroke-width="0.6"/>
<circle cx="1115.0" cy="296.7" r="3" fill="#a9c9f2" stroke="#1f3a6a" stroke-width="0.6"/>
<circle cx="1205.2" cy="306.4" r="3" fill="#a9c9f2" stroke="#1f3a6a" stroke-width="0.6"/>
<circle cx="1212.8" cy="305.3" r="3" fill="#a9c9f2" stroke="#1f3a6a" stroke-width="0.6"/>
<circle cx="1220.0" cy="305.3" r="3" fill="#a9c9f2" stroke="#1f3a6a" stroke-width="0.6"/>
<rect x="851.5" y="273.5" width="8" height="8" fill="#c0263a" stroke="#5a1018" stroke-width="0.5"/>
<rect x="1277.5" y="84" width="1.5" height="603" fill="#e6e6e6"/>
<g opacity="0.35"><rect x="1258" y="89" width="4" height="3" fill="#fff"/><rect x="1260" y="87" width="3" height="2" fill="#fff"/></g>
</g></svg>
<div class="a" style="left:773.6px;top:83.7px;width:86.4px;height:16.5px;background:#ecedf4;border:1px solid #d2d5de"></div>
<div class="t" style="left:779.20px;top:87.60px;font-size:9px;color:#687084;transform:scaleX(0.978);transform-origin:left center;">Central perspective</div>
<svg style="left:356px;top:580px" width="80" height="107" viewBox="356 580 80 107">
<path d="M408 630 V604" stroke="#0a1a80" stroke-width="4"/><path d="M402 606 L408 594 L414 606Z" fill="#0a1a80"/>
<path d="M409 632 H383" stroke="#2aa02a" stroke-width="4"/><path d="M387 625.5 L372 633 L387 638.5Z" fill="#1f7a1f"/>
<circle cx="399" cy="627" r="3" fill="#c03030"/><path d="M396 631 L401 636 M401 631 L396 636" stroke="#c03030" stroke-width="1.2"/>
<text x="417.5" y="595.5" font-family="Liberation Sans" font-weight="bold" font-size="9.5" fill="#1a1aa0">Z</text>
<text x="364.5" y="656" font-family="Liberation Sans" font-weight="bold" font-size="8.5" fill="#40c040">Y</text>
<circle cx="367" cy="676" r="4.5" fill="none" stroke="#333" stroke-width="1.1" stroke-dasharray="1.6 1.4"/><rect x="365.5" y="674.5" width="3" height="3" fill="none" stroke="#999" stroke-width="0.5"/>
</svg>
<div class="a" style="left:0;top:687px;width:1279px;height:19px;background:linear-gradient(#e6ebf3,#dfe6f0);border-bottom:1px solid #c5c9cf"></div>
<div class="a" style="left:3px;top:687px;width:263px;height:19px;background:#fff;border-left:1px solid #c8c8c8;border-right:1px solid #d0d0d0"></div>
<div class="t" style="left:8.4px;top:692.5px;font-size:8px;font-weight:bold;color:#111">Click to select; Ctrl+click to add; Shift+click to select entity group</div>
<div class="t" style="left:1px;top:710.5px;font-size:7.8px;color:#666">Press F1 to get Help.</div>
<div class="t" style="left:602px;top:710.5px;font-size:7.8px;color:#555">Country:</div>
<div class="t" style="left:637.4px;top:710.5px;font-size:7.8px;color:#222">USA</div>
<div class="t" style="left:736.5px;top:710.5px;font-size:7.8px;color:#555">Drawing type:</div>
<div class="t" style="left:789px;top:710.5px;font-size:7.8px;color:#222">Scale definition</div>
<div class="t" style="left:949.4px;top:710.5px;font-size:7.8px;color:#555">Scale:</div>
<div class="t" style="left:973px;top:710.5px;font-size:7.8px;color:#222">1:96</div>
<div class="t" style="left:992px;top:710.5px;font-size:7.8px;color:#222">1/8"=1</div>
<div class="t" style="left:1019px;top:710.5px;font-size:7.8px;color:#555">Length:</div>
<div class="t" style="left:1085px;top:710.5px;font-size:7.8px;color:#555">Angle:</div>
<div class="t" style="left:1113px;top:710.5px;font-size:7.8px;color:#bbb">0.000</div>
<div class="t" style="left:1147px;top:710.5px;font-size:7.8px;color:#bbb">deg</div>
<div class="t" style="left:1178.5px;top:710.5px;font-size:7.8px;color:#555">%:</div>
<div class="t" style="left:1193px;top:710.5px;font-size:7.8px;color:#222">3</div>
<div class="t" style="left:1224.7px;top:710.5px;font-size:7.8px;color:#222">Notifications</div>
<div class="a" style="left:729px;top:707px;width:1px;height:13px;background:#dadada"></div>
<div class="a" style="left:946px;top:707px;width:1px;height:13px;background:#dadada"></div>
<div class="a" style="left:1017px;top:707px;width:1px;height:13px;background:#dadada"></div>
<div class="a" style="left:1081.6px;top:707px;width:1px;height:13px;background:#dadada"></div>
<div class="a" style="left:1141.6px;top:707px;width:1px;height:13px;background:#dadada"></div>
<div class="a" style="left:1174.5px;top:707px;width:1px;height:13px;background:#dadada"></div>
<div class="a" style="left:1208px;top:707px;width:1px;height:13px;background:#dadada"></div>
<svg style="left:1211px;top:706px" width="14" height="14"><rect x="1.5" y="2.5" width="9" height="8" fill="#fff" stroke="#c02030" stroke-width="1"/><path d="M6 4 V7.5 M6 8.5 V9.5" stroke="#c02030" stroke-width="1.2"/><path d="M4 10.5 L6 13 L7 10.5" fill="#fff" stroke="#c02030" stroke-width="0.8"/></svg>
<div class="a" style="left:1237px;top:677.5px;width:27px;height:25.5px;background:#f0f0f0"></div>
<svg style="left:1237px;top:677.5px" width="27" height="26"><path d="M8 20 L13.5 6 L19 20" stroke="#222" stroke-width="1.5" fill="none"/></svg>
</body></html>
